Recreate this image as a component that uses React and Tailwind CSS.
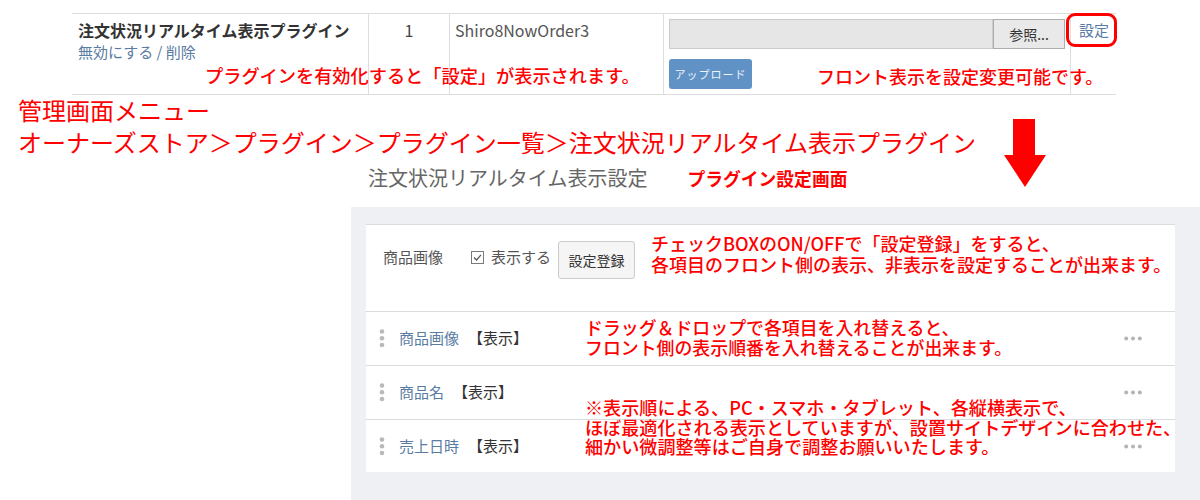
export default function App() {
  const rowItems = ["商品画像", "商品名", "売上日時"];
  return (
    <div className="relative w-[1200px] h-[500px] overflow-hidden bg-white font-['Noto_Sans_CJK_JP','Noto_Sans',sans-serif] text-[#333]">
      {/* plugin table */}
      <div className="pl-[72px] pt-[13px]">
        <div className="flex w-[1044px] h-[82px] border-y border-[#dddddd]">
          <div className="w-[297px] border-r border-[#dddddd] pl-[6px] pt-[5px] leading-[22px]">
            <div className="text-[16px] font-bold text-[#333]">注文状況リアルタイム表示プラグイン</div>
            <div className="text-[15px] text-[#5a7ca3]">無効にする / 削除</div>
          </div>
          <div className="w-[81px] border-r border-[#dddddd] pt-[5px] text-center text-[16px] leading-[22px] text-[#444]">1</div>
          <div className="w-[214px] border-r border-[#dddddd] pl-[5px] pt-[5px] text-[16px] leading-[22px] text-[#555]">Shiro8NowOrder3</div>
          <div className="w-[407px] border-r border-[#dddddd] pl-[5px] pt-[5px]">
            <div className="flex h-[30px]">
              <div className="w-[324px] h-[30px] bg-[#e6e6e6] border border-[#cccccc]"></div>
              <div className="w-[72px] h-[30px] bg-[#e9e9e9] border border-[#adadad] flex items-center justify-center text-[14px] text-[#333]">参照...</div>
            </div>
            <div className="mt-[10px] w-[83px] h-[30px] rounded-[3px] bg-[#6092c6] flex items-center justify-center text-[11px] text-[#eef4fb] tracking-[1px]">アップロード</div>
          </div>
          <div className="flex-1 pl-[8px] pt-[5px] text-[15px] leading-[22px] text-[#5a7ca3]">設定</div>
        </div>
      </div>

      {/* heading */}
      <div className="pl-[18px] -mt-[1px] text-[24px] leading-[32px] text-[#ff0000]">
        <div>管理画面メニュー</div>
        <div>オーナーズストア＞プラグイン＞プラグイン一覧＞注文状況リアルタイム表示プラグイン</div>
      </div>

      {/* settings title */}
      <div className="h-[49px] pl-[368px] pt-[6px] flex items-start gap-[40px]">
        <div className="text-[20px] leading-[28px] text-[#666]">注文状況リアルタイム表示設定</div>
        <div className="text-[17.8px] leading-[28px] font-bold text-[#ff0000]">プラグイン設定画面</div>
      </div>

      {/* settings panel */}
      <div className="ml-[351px] h-[293px] bg-[#eff0f3] pt-[17px] pl-[15px] pr-[25px]">
        <div className="bg-white border-t border-[#dcdcdc] h-[248px]">
          <div className="h-[87px] border-b border-[#d9dcdf] pl-[17px] pt-[16px] flex items-start">
            <div className="flex items-center h-[38px]">
              <span className="mb-[6px] text-[15px] text-[#555]">商品画像</span>
              <svg className="ml-[28px] mb-[6px]" width="13" height="13" viewBox="0 0 13 13">
                <rect x="0.5" y="0.5" width="12" height="12" fill="white" stroke="#7a7a7a" />
                <path d="M3 6.5 L5.5 9 L10 3.8" fill="none" stroke="#555" strokeWidth="1.2" />
              </svg>
              <span className="ml-[7px] mb-[6px] text-[15px] text-[#555]">表示する</span>
              <div className="ml-[7px] w-[77px] h-[38px] bg-[#f5f5f5] border border-[#cccccc] rounded-[3px] flex items-center justify-center text-[14px] text-[#333]">設定登録</div>
            </div>
          </div>
          {rowItems.map((name, i) => (
            <div key={name} className={`${i < 2 ? "h-[54px] border-b border-[#d9dcdf]" : "h-[53px]"} flex items-center justify-between pl-[13px] pr-[33px]`}>
              <div className="flex items-center">
                <svg width="6" height="19" viewBox="0 0 6 19">
                  <circle cx="3" cy="2.5" r="2.3" fill="#b9b9b9" />
                  <circle cx="3" cy="9.2" r="2.3" fill="#b9b9b9" />
                  <circle cx="3" cy="16" r="2.3" fill="#b9b9b9" />
                </svg>
                <span className="ml-[14px] text-[15px] text-[#5a7ca3]">{name}</span>
                <span className="ml-[9px] text-[15px] text-[#333]">【表示】</span>
              </div>
              <svg width="18" height="5" viewBox="0 0 18 5">
                <circle cx="2.2" cy="2.5" r="2" fill="#b4b4b4" />
                <circle cx="9" cy="2.5" r="2" fill="#b4b4b4" />
                <circle cx="15.8" cy="2.5" r="2" fill="#b4b4b4" />
              </svg>
            </div>
          ))}
        </div>
      </div>

      {/* overlays: annotations */}
      <div className="absolute left-[1066px] top-[13px] w-[51px] h-[34px] border-[3px] border-[#ff0000] rounded-[9px]"></div>
      <div className="absolute left-[205px] top-[64px] text-[18.2px] leading-[22px] font-medium text-[#ff0000] whitespace-nowrap">プラグインを有効化すると「設定」が表示されます。</div>
      <div className="absolute left-[817px] top-[65px] text-[18px] leading-[22px] font-medium text-[#ff0000] whitespace-nowrap">フロント表示を設定変更可能です。</div>
      <svg className="absolute left-[1004px] top-[119px]" width="42" height="68" viewBox="0 0 42 68">
        <polygon points="9,0 31,0 31,36 42,36 21,68 0,36 9,36" fill="#ff0000" />
      </svg>
      <div className="absolute left-[651px] top-[233px] text-[18px] leading-[21px] font-medium text-[#ff0000] whitespace-nowrap">
        <div>チェックBOXのON/OFFで「設定登録」をすると、</div>
        <div>各項目のフロント側の表示、非表示を設定することが出来ます。</div>
      </div>
      <div className="absolute left-[585px] top-[317px] text-[17.9px] leading-[20px] font-medium text-[#ff0000] whitespace-nowrap">
        <div>ドラッグ＆ドロップで各項目を入れ替えると、</div>
        <div>フロント側の表示順番を入れ替えることが出来ます。</div>
      </div>
      <div className="absolute left-[585px] top-[398px] text-[18.1px] leading-[19.5px] font-medium text-[#ff0000] whitespace-nowrap">
        <div>※表示順による、PC・スマホ・タブレット、各縦横表示で、</div>
        <div>ほぼ最適化される表示としていますが、設置サイトデザインに合わせた、</div>
        <div>細かい微調整等はご自身で調整お願いいたします。</div>
      </div>
    </div>
  );
}
